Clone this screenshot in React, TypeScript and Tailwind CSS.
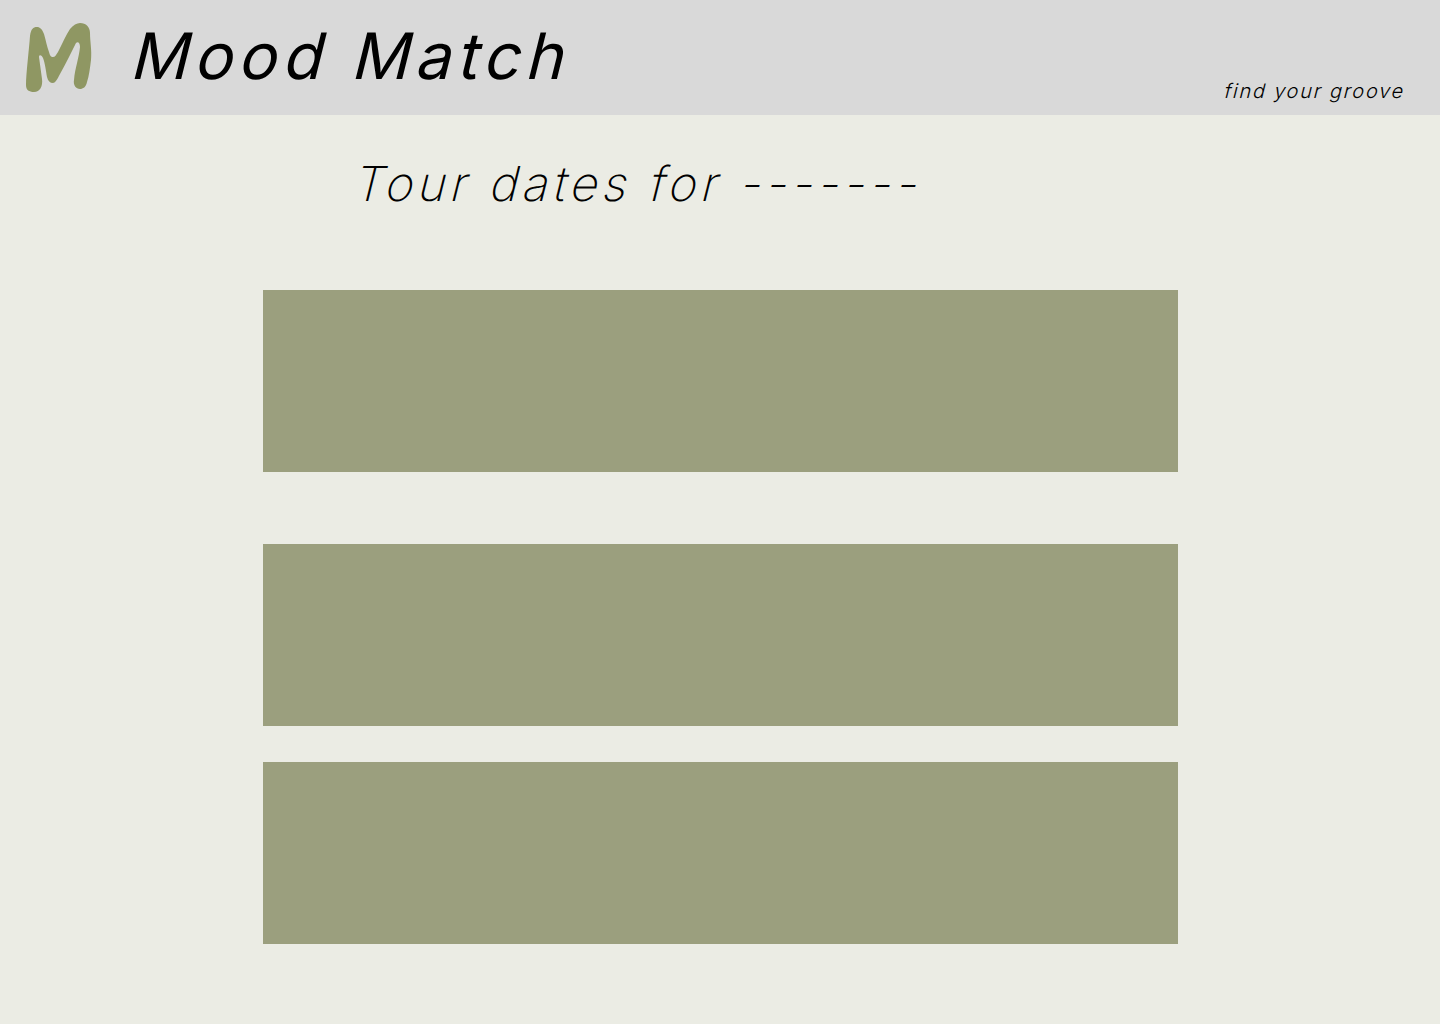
export default function App() {
  return (
    <div className="min-h-[1024px] bg-[#ebece4] font-['Inter',sans-serif] text-black">
      {/* Header */}
      <header className="flex h-[115px] bg-[#d9d9d9] pl-[25px] pr-[41px]">
        <svg width="68" height="70" viewBox="25 23 68 70" className="mt-[23px] shrink-0">
          <path
            fill="#8f9763"
            d="M26 85C26 74 29 50 30 36C31 29 33 27 37 27C40 27 42 29 44 34C46 41 47 47 49 52C50 56 51 57 53 57C55 57 56 55 58 52C62 44 66 35 70 29C73 25 77 23 80 23C86 23 90 27 90 33C90 42 92 50 91 60C90 68 89 76 87 82C86 87 83 89 80 89C76 89 73 85 74 80C75 68 79 58 80 47C80 43 78 41 76 43C71 53 66 63 60 74C57 80 55 83 53 83C50 83 48 81 47 77C46 71 45 63 43 58C42 55 39 54 39 57C40 64 41 72 42 79C43 86 40 92 34 92C29 92 26 90 26 85Z"
          />
        </svg>
        <h1 className="ml-[27px] mt-[17px] origin-bottom -skew-x-[14deg] text-[64px] leading-[77px] font-normal tracking-[5.85px]">Mood Match</h1>
        <p className="ml-auto mt-[79px] origin-bottom -skew-x-[14deg] text-[20px] leading-[24px] font-light tracking-[1.73px]">find your groove</p>
      </header>

      <main className="ml-[263px] w-[915px]">
        <h2 className="ml-[86px] mt-[40px] w-fit origin-bottom -skew-x-[14deg] text-[48px] leading-[58px] font-extralight tracking-[4.6px]">
          Tour dates for -------
        </h2>
        <div className="mt-[77px] h-[182px] bg-[#9b9f7e]" />
        <div className="mt-[72px] h-[182px] bg-[#9b9f7e]" />
        <div className="mt-[36px] h-[182px] bg-[#9b9f7e]" />
      </main>
    </div>
  );
}
